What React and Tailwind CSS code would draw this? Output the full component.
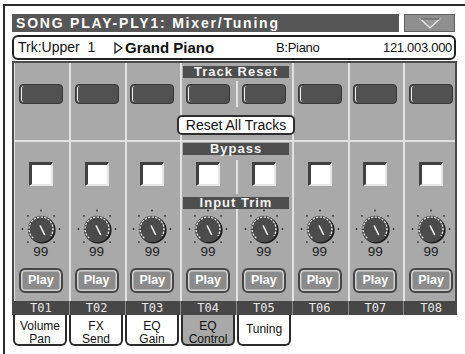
import React from "react";

const COLS = [0, 1, 2, 3, 4, 5, 6, 7];
const SEP = "shadow-[inset_2px_0_0_#e1e1e1]";
const GRID = "grid grid-cols-[repeat(8,55.75px)]";

function Knob() {
  const dots = [-135, -90, -45, 0, 45, 90, 135].map((a) => {
    const r = (a * Math.PI) / 180;
    return [20 + 18.5 * Math.sin(r), 20 - 18.5 * Math.cos(r)];
  });
  const pt = (a, rad) => {
    const r = (a * Math.PI) / 180;
    return [20 + rad * Math.sin(r), 20 - rad * Math.cos(r)];
  };
  const [x1, y1] = pt(-140, 12);
  const [x2, y2] = pt(125, 12);
  return (
    <svg width="40" height="40" viewBox="0 0 40 40" className="block">
      {dots.map(([x, y], i) => (
        <circle key={i} cx={x} cy={y} r="0.9" fill="#353535" />
      ))}
      <circle cx="21" cy="21" r="13.6" fill="#1c1c1c" />
      <circle cx="20" cy="20" r="13.2" fill="#4b4b4b" />
      <path
        d={`M${x1} ${y1} A12 12 0 1 1 ${x2} ${y2}`}
        fill="none"
        stroke="#f2f2f2"
        strokeWidth="1.2"
        strokeDasharray="2.2 1.4"
      />
      <line x1="19.3" y1="17" x2="23.5" y2="25.5" stroke="#f4f4f4" strokeWidth="1.6" strokeLinecap="round" />
    </svg>
  );
}

function LabelRow({ h, pt, text }) {
  return (
    <div className={`${GRID} ${h}`}>
      {[0, 1, 2].map((i) => (
        <div key={i} className={SEP} />
      ))}
      <div className={`col-span-2 px-[3px] ${pt} ${SEP}`}>
        <div className="h-[12px] bg-[#4e4e4e] text-[#f4f4f4] font-bold text-[13px] leading-[12px] tracking-[1px] text-center whitespace-nowrap">
          {text}
        </div>
      </div>
      {[5, 6, 7].map((i) => (
        <div key={i} className={SEP} />
      ))}
    </div>
  );
}

function Tab({ lines, active }) {
  return (
    <div
      className={`w-[54px] h-[31px] border-2 border-t-0 border-[#2a2a2a] rounded-b-[6px] flex flex-col items-center text-[12px] leading-[12.5px] text-[#111] ${
        active ? "bg-[#a9a9a9]" : "bg-white"
      } ${lines.length > 1 ? "pt-[5px]" : "pt-[8px]"}`}
    >
      {lines.map((l) => (
        <span key={l}>{l}</span>
      ))}
    </div>
  );
}

export default function App() {
  return (
    <div className="w-[465px] h-[354px] bg-white overflow-hidden pl-[3px] pt-[4px] font-['Liberation_Sans',Arial,sans-serif]">
      <div className="h-full border-l-2 border-t-2 border-[#2a2a2a] pl-[7px] pt-[8px]">
        {/* Header */}
        <div className="flex gap-[5px] h-[18px]">
          <div className="w-[387px] bg-[#565656] text-white font-bold text-[14px] leading-[18px] tracking-[1.8px] pl-[4px] whitespace-nowrap">
            SONG PLAY-PLY1: Mixer/Tuning
          </div>
          <div className="w-[51px] bg-[#8f8f8f] border border-[#5e5e5e] flex items-center justify-center">
            <svg width="22" height="11" viewBox="0 0 22 11">
              <polygon points="1.5,1 20.5,1 11,10" fill="#9a9a9a" stroke="#f0f0f0" strokeWidth="1.2" />
              <line x1="1.5" y1="1" x2="20.5" y2="1" stroke="#4a4a4a" strokeWidth="1.2" />
            </svg>
          </div>
        </div>

        {/* Track info */}
        <div className="mt-[3px] w-[444px] h-[25px] border-2 border-[#222] rounded-[6px] bg-white flex items-center pl-[4px] pr-[2px] text-[#111] leading-[21px] whitespace-nowrap">
          <span className="text-[14px] w-[90px]">Trk:Upper&nbsp;&nbsp;1</span>
          <svg width="9" height="12" viewBox="0 0 9 12" className="ml-[6px] mr-[2px]">
            <polygon points="1,1 8,6 1,11" fill="white" stroke="#111" strokeWidth="1.2" />
          </svg>
          <span className="text-[15px] font-bold w-[151px]">Grand Piano</span>
          <span className="text-[13px] tracking-[-0.3px]">B:Piano</span>
          <span className="ml-auto text-[13px] tracking-[-0.3px]">121.003.000</span>
        </div>

        {/* Mixer panel */}
        <div className="mt-[1px] w-[445px] border-x-2 border-t-2 border-[#4a4a4a] bg-[#a9a9a9]">
          <div className="overflow-hidden">
            <div className="-ml-[1px] w-[446px]">
              {/* Track Reset */}
              <LabelRow h="h-[18px]" pt="pt-[3px]" text="Track Reset" />
              <div className={`${GRID} h-[26px]`}>
                {COLS.map((i) => (
                  <div key={i} className={`${SEP} flex justify-center`}>
                    <div className="mt-[3px] w-[44px] h-[20px] rounded-[4px] border border-[#383838] bg-[#515151] p-[1px]">
                      <div className="h-full rounded-[3px] border-l-[1.5px] border-[#f0f0f0]" />
                    </div>
                  </div>
                ))}
              </div>
              <div className={`${GRID} h-[33px]`}>
                {[0, 1, 2].map((i) => (
                  <div key={i} className={SEP} />
                ))}
                <div className={`col-span-2 flex justify-center ${SEP}`}>
                  <div className="relative z-10 shrink-0 mt-[8px] w-[118px] h-[20px] rounded-[5px] border-2 border-[#2e2e2e] bg-white text-[14px] leading-[16px] text-center text-[#111] whitespace-nowrap">
                    Reset All Tracks
                  </div>
                </div>
                {[5, 6, 7].map((i) => (
                  <div key={i} className={SEP} />
                ))}
              </div>
              <div className="h-[2px] bg-[#e1e1e1]" />

              {/* Bypass */}
              <LabelRow h="h-[18px]" pt="pt-[1px]" text="Bypass" />
              <div className={`${GRID} h-[34px]`}>
                {COLS.map((i) => (
                  <div key={i} className={`${SEP} flex justify-center`}>
                    <div className="mt-[2px] w-[24px] h-[24px] bg-white border-t-[3px] border-l-[3px] border-r-2 border-b-2 border-t-[#404040] border-l-[#404040] border-r-[#e6e6e6] border-b-[#e6e6e6]" />
                  </div>
                ))}
              </div>

              {/* Input Trim */}
              <LabelRow h="h-[15px]" pt="pt-[3px]" text="Input Trim" />
              <div className={`${GRID} h-[52px]`}>
                {COLS.map((i) => (
                  <div key={i} className={`${SEP} flex flex-col items-center`}>
                    <Knob />
                    <div className="-mt-[4px] text-[13.5px] leading-[14px] text-[#1e1e1e]">99</div>
                  </div>
                ))}
              </div>

              {/* Play */}
              <div className={`${GRID} h-[40px]`}>
                {COLS.map((i) => (
                  <div key={i} className={`${SEP} flex justify-center`}>
                    <div className="mt-[7px] w-[44px] h-[25px] rounded-[6px] border-2 border-[#464646] bg-[#8b8b8b] shadow-[inset_0_0_0_1.5px_#d2d2d2] flex items-center justify-center text-white font-bold text-[12.5px]">
                      Play
                    </div>
                  </div>
                ))}
              </div>

              {/* Track strip */}
              <div className={`${GRID} h-[14px] bg-[#474747]`}>
                {COLS.map((i) => (
                  <div
                    key={i}
                    className={`${i > 0 ? "shadow-[inset_1px_0_0_#8c8c8c]" : ""} text-center text-[12px] leading-[14px] text-[#e8e8e8] font-['DejaVu_Sans_Mono',monospace]`}
                  >
                    {`T0${i + 1}`}
                  </div>
                ))}
              </div>
            </div>
          </div>
        </div>

        {/* Tabs */}
        <div className="flex gap-[2px] ml-[1px]">
          <Tab lines={["Volume", "Pan"]} />
          <Tab lines={["FX", "Send"]} />
          <Tab lines={["EQ", "Gain"]} />
          <Tab lines={["EQ", "Control"]} active />
          <Tab lines={["Tuning"]} />
        </div>
      </div>
    </div>
  );
}
